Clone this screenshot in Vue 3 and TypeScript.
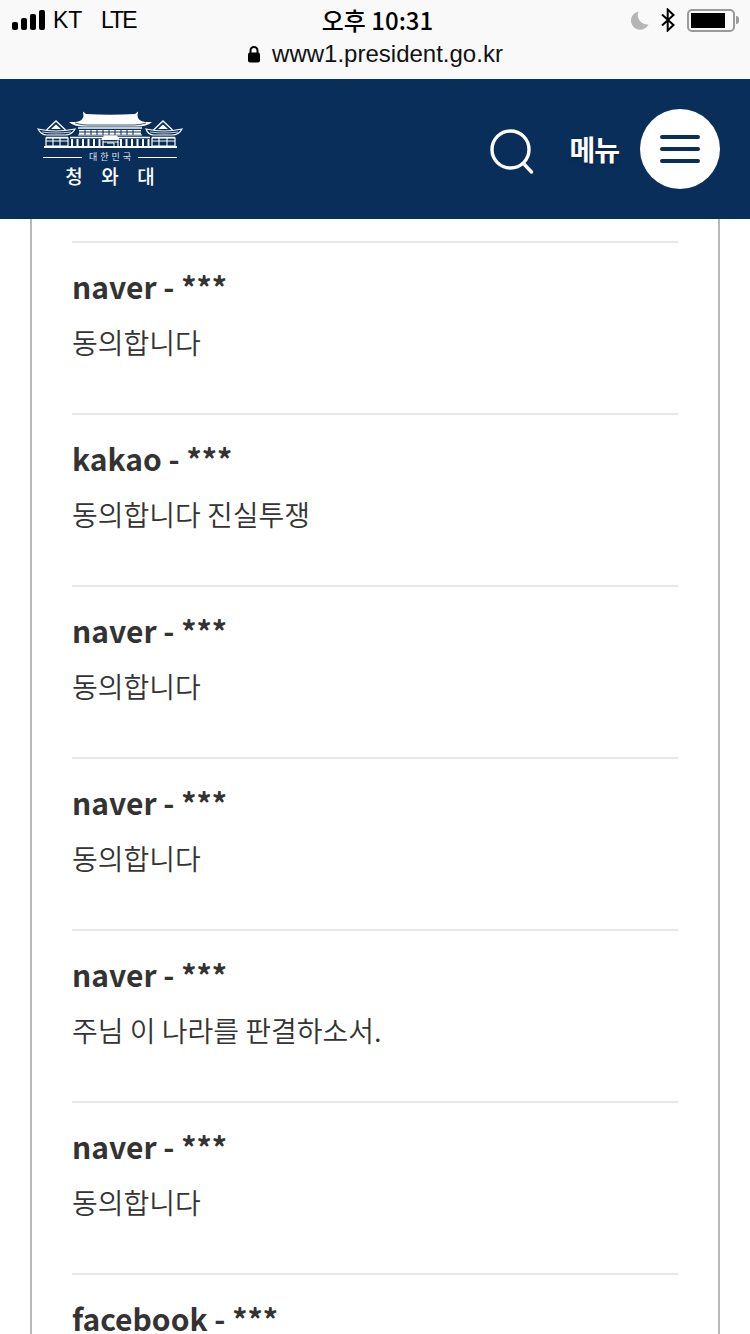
<script setup lang="ts">
interface Comment { author: string; text: string }
const comments: Comment[] = [
  { author: 'naver - ***', text: '동의합니다' },
  { author: 'kakao - ***', text: '동의합니다 진실투쟁' },
  { author: 'naver - ***', text: '동의합니다' },
  { author: 'naver - ***', text: '동의합니다' },
  { author: 'naver - ***', text: '주님 이 나라를 판결하소서.' },
  { author: 'naver - ***', text: '동의합니다' },
  { author: 'facebook - ***', text: '' },
]
</script>

<template>
  <div class="page">
    <div class="browser">
      <div class="status">
        <div class="status-left">
          <span class="signal"><i class="b1"></i><i class="b2"></i><i class="b3"></i><i class="b4"></i></span>
          <span class="carrier">KT</span>
          <span class="net">LTE</span>
        </div>
        <div class="clock">오후 10:31</div>
        <div class="status-right">
          <svg class="moon" width="19" height="19" viewBox="0 0 19 19"><path d="M8.500 0.500 A9.200 9.200 0 1 0 18.500 13.500 A9.500 9.500 0 0 1 8.500 0.500Z" fill="#b5b5b5"/></svg>
          <svg class="bt" width="16" height="24" viewBox="0 0 16 24"><path d="M2 6.500 L13.500 17 L7.700 22.500 V1.500 L13.500 7 L2 17.500" fill="none" stroke="#000" stroke-width="2"/></svg>
          <span class="battery"><span class="fill"></span></span>
          <span class="nub"></span>
        </div>
      </div>
      <div class="url">
        <svg width="14" height="18" viewBox="0 0 14 18"><path d="M3.500 8 V5.500 a3.500 3.500 0 0 1 7 0 V8" fill="none" stroke="#000" stroke-width="2"/><rect x="1" y="7.500" width="12" height="10" rx="2" fill="#000"/></svg>
        <span>www1.president.go.kr</span>
      </div>
    </div>

    <header class="header">
      <div class="logo">
        <svg class="palace" width="146" height="40" viewBox="0 0 146 40">
          <!-- main roof -->
          <path d="M46 1.500 L49 4 Q73 5.500 98 4 L101 1.500 L100.500 6 Q101 11 108 12 L115 12 Q110 16.500 100 16.500 H47 Q37 16.500 32 12 L39 12 Q46 11 46.500 6Z" fill="#fff"/>
          <path d="M38 13 Q44 15 50 15 H97 Q103 15 109 13" fill="none" stroke="#0a2e5a" stroke-width="0.800"/>
          <!-- upper floor -->
          <path d="M41 18 H105" stroke="#fff" stroke-width="1.600"/>
          <path d="M41 25 H105" stroke="#fff" stroke-width="1.200"/>
          <path d="M42 20 V24.500 H104 V20Z" fill="#fff"/>
          <path d="M48 19 V25 M54 19 V25 M60 19 V25 M66 19 V25 M72 19 V25 M78 19 V25 M84 19 V25 M90 19 V25 M96 19 V25 M42 22 H104" stroke="#0a2e5a" stroke-width="1"/>
          <!-- pavilion gables -->
          <path d="M9.500 20 L19 11 L28.500 20" fill="none" stroke="#fff" stroke-width="1.300"/>
          <path d="M116.500 20 L126 11 L135.500 20" fill="none" stroke="#fff" stroke-width="1.300"/>
          <path d="M14 19 L19 14.500 L24 19Z M121 19 L126 14.500 L131 19Z" fill="#fff"/>
          <!-- pavilion eaves -->
          <path d="M1 19 Q10 21 19 21 Q28 21 38 19 Q35 25 28 25 H10 Q4 25 1 19Z" fill="#0a2e5a" stroke="#fff" stroke-width="1.200"/>
          <path d="M109 19 Q118 21 127 21 Q136 21 145 19 Q142 25 135 25 H117 Q111 25 109 19Z" fill="#0a2e5a" stroke="#fff" stroke-width="1.200"/>
          <path d="M5 22 Q12 23 19 23 Q27 23 34 22 M113 22 Q120 23 127 23 Q134 23 141 22" fill="none" stroke="#fff" stroke-width="0.800"/>
          <!-- ground floor -->
          <path d="M9 27.500 H31 M33 27.500 H113 M115 27.500 H138" stroke="#fff" stroke-width="1.400"/>
          <path d="M9 28 H31 V36 H9Z M115 28 H138 V36 H115Z" fill="none" stroke="#fff" stroke-width="1.200"/>
          <path d="M9 31 H31 M115 31 H138 M16 28 V36 M23 28 V36 M122 28 V36 M130 28 V36" stroke="#fff" stroke-width="1.100"/>
          <path d="M35 29 V36 M40.500 29 V36 M46 29 V36 M51.500 29 V36 M57 29 V36 M62.500 29 V36 M84 29 V36 M89.500 29 V36 M95 29 V36 M100.500 29 V36 M106 29 V36 M111.500 29 V36" stroke="#fff" stroke-width="2"/>
          <!-- porch -->
          <path d="M64 30 L67 25.500 H80 L83 30Z" fill="#fff"/>
          <path d="M66 30.500 V36 M81 30.500 V36 M66 32 H81" stroke="#fff" stroke-width="1.200"/>
          <path d="M70 33 H77 V36" fill="none" stroke="#fff" stroke-width="1"/>
          <!-- base -->
          <path d="M7 37 H140" stroke="#fff" stroke-width="1.800"/>
        </svg>
        <div class="rule-row"><i></i><span>대한민국</span><i></i></div>
        <div class="logo-name"><span>청</span><span>와</span><span>대</span></div>
      </div>
      <div class="actions">
        <svg class="search" width="44" height="46" viewBox="0 0 44 46">
          <circle cx="20.500" cy="20.500" r="18.500" fill="none" stroke="#fff" stroke-width="3.400"/>
          <path d="M33.500 34.500 L41.500 43" stroke="#fff" stroke-width="3.400" stroke-linecap="round"/>
        </svg>
        <span class="menu-label">메뉴</span>
        <button class="menu-btn" type="button" aria-label="메뉴">
          <i></i><i></i><i></i>
        </button>
      </div>
    </header>

    <main class="panel-wrap">
      <section class="panel">
        <article v-for="(c, i) in comments" :key="i" class="comment">
          <h3>{{ c.author }}</h3>
          <p>{{ c.text }}</p>
        </article>
      </section>
    </main>
  </div>
</template>

<style>
html, body { margin: 0; background: #fff; overflow: hidden; }
</style>

<style scoped>
.page {
  width: 750px;
  height: 1334px;
  overflow: hidden;
  display: flex;
  flex-direction: column;
  font-family: "Noto Sans CJK KR", "Noto Sans", sans-serif;
}
.browser {
  height: 79px;
  flex: none;
  background: #f9f9f9;
  font-family: "Liberation Sans", "Noto Sans CJK KR", sans-serif;
  color: #000;
}
.status {
  height: 40px;
  display: grid;
  grid-template-columns: 1fr auto 1fr;
  align-items: center;
  padding: 0 11px 0 12px;
}
.status-left { display: flex; align-items: center; font-size: 23px; padding-top: 1px; }
.signal { display: flex; align-items: flex-end; gap: 3px; height: 20px; margin-right: 8px; margin-top: -1px; }
.signal i { width: 6px; background: #000; border-radius: 2px; display: block; }
.b1 { height: 8px; }
.b2 { height: 12px; }
.b3 { height: 16px; }
.b4 { height: 20px; }
.carrier { width: 48px; }
.net { letter-spacing: -2px; }
.clock {
  font-size: 24px;
  font-weight: 500;
  margin: -2px 0 0 4px;
  font-family: "Noto Sans CJK KR", sans-serif;
}
.status-right { display: flex; align-items: center; justify-content: flex-end; }
.moon { margin-right: 11px; }
.bt { margin-right: 11px; }
.battery {
  width: 48px;
  height: 23px;
  box-sizing: border-box;
  border: 2px solid #9a9a9a;
  border-radius: 5px;
  padding: 2px;
  display: flex;
}
.fill { width: 34px; background: #000; display: block; }
.nub { width: 3px; height: 8px; background: #9a9a9a; border-radius: 0 3px 3px 0; margin-left: 1px; }
.url {
  height: 28px;
  display: flex;
  align-items: center;
  justify-content: center;
  gap: 11px;
  font-size: 24px;
  color: #111;
}
.header {
  height: 140px;
  flex: none;
  background: #0a2e5a;
  display: flex;
  align-items: center;
  justify-content: space-between;
  padding: 0 30px 0 37px;
  position: relative;
  z-index: 1;
}
.logo {
  width: 146px;
  display: flex;
  flex-direction: column;
  align-items: center;
  color: #fff;
}
.palace { display: block; }
.rule-row {
  width: 134px;
  display: flex;
  align-items: center;
  gap: 7px;
  height: 14px;
}
.rule-row i { flex: 1; height: 1px; background: #fff; }
.rule-row span { font-size: 9px; letter-spacing: 3px; margin-right: -3px; line-height: 14px; color: #dfe5ee; }
.logo-name {
  display: flex;
  gap: 18.500px;
  font-size: 19px;
  font-weight: 500;
  line-height: 24px;
}
.actions { display: flex; align-items: center; }
.search { display: block; margin-right: 35px; margin-top: 5px; }
.menu-label {
  color: #fff;
  font-size: 28px;
  font-weight: 700;
  letter-spacing: -1px;
  margin-right: 21px;
  line-height: 1;
  text-shadow: 1px 2px 3px rgba(0, 0, 0, 0.25);
}
.menu-btn {
  width: 80px;
  height: 80px;
  border: 0;
  border-radius: 50%;
  background: #fff;
  padding: 0;
  display: flex;
  flex-direction: column;
  align-items: center;
  justify-content: center;
  gap: 8px;
}
.menu-btn i { width: 40px; height: 4px; border-radius: 2px; background: #0a2e5a; display: block; }
.panel-wrap { flex: 1; padding: 0 30px; min-height: 0; }
.panel {
  box-sizing: border-box;
  width: 690px;
  min-height: 100%;
  border-left: 2px solid #b9b9b9;
  border-right: 2px solid #b9b9b9;
  padding: 22px 40px 0;
}
.comment {
  height: 172px;
  box-sizing: border-box;
  border-top: 2px solid #e6e6e6;
  padding-top: 23px;
}
.comment h3 {
  margin: 0;
  font-size: 30px;
  line-height: 40px;
  font-weight: 700;
  color: #333;
}
.comment p {
  margin: 18px 0 0;
  font-size: 28px;
  line-height: 36px;
  font-weight: 350;
  color: #333;
}
</style>
